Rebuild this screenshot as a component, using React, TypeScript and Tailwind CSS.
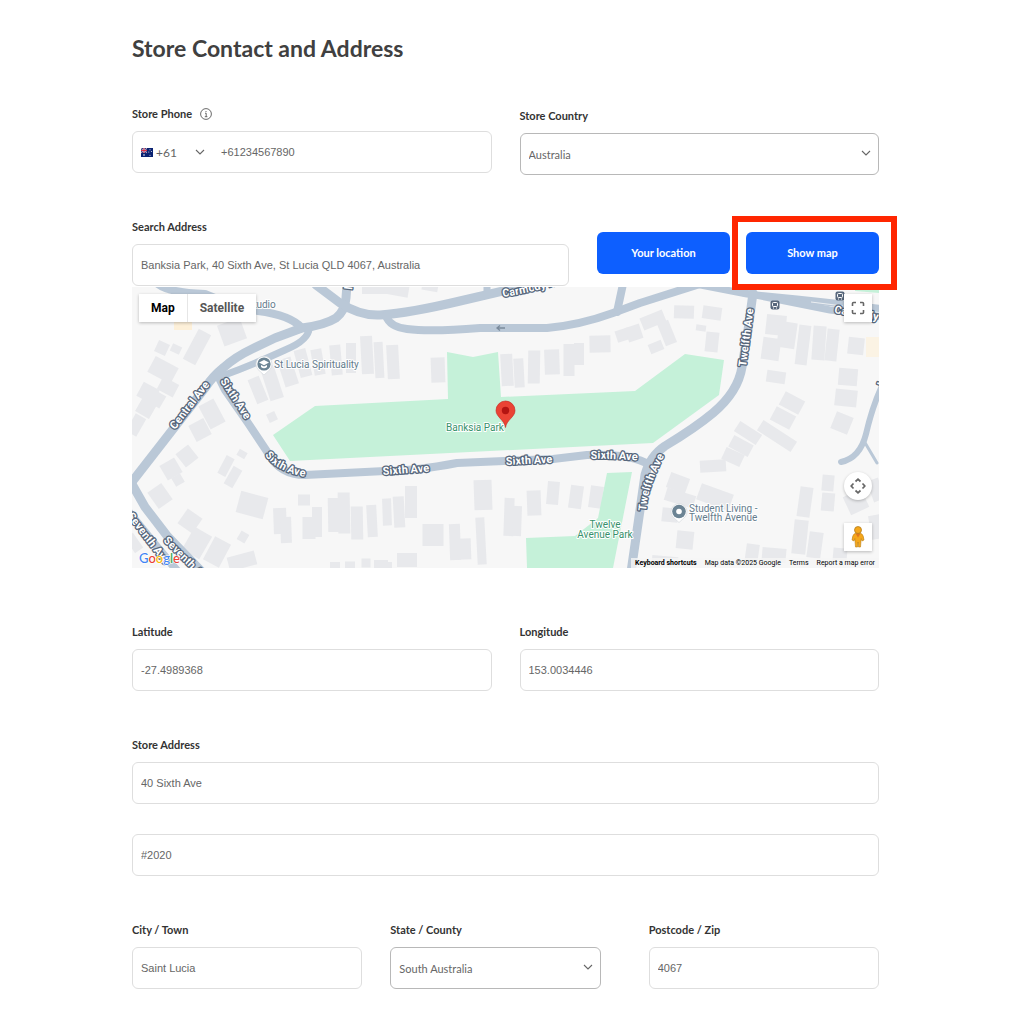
import type { ReactNode } from 'react'

// [center x, center y, width, height, rotation]
type Building = [number, number, number, number, number?]

const buildings: Building[] = [
  [162, 348, 12, 12, 25], [176, 349, 10, 8, 25], [197, 347, 14, 34, 28], [232, 332, 24, 22, -20],
  [163, 370, 26, 18, 28], [148, 393, 18, 16, 28], [168, 387, 18, 14, 28], [258, 390, 12, 26, -22],
  [272, 383, 14, 34, -18], [288, 372, 14, 28, -18], [303, 363, 12, 28, -15], [318, 362, 11, 26, -10],
  [336, 360, 11, 30, -5], [351, 358, 10, 30], [367, 355, 12, 38, -3], [379, 360, 9, 36, -3],
  [375, 289, 26, 10], [393, 288, 32, 14, 10], [430, 287, 16, 8, 10], [393, 362, 12, 34, -3],
  [438, 370, 14, 25, -2], [507, 370, 12, 32, -3], [519, 373, 10, 29, -3], [534, 367, 12, 33, 1],
  [552, 362, 15, 25, -2], [569, 360, 11, 32], [579, 354, 10, 22], [600, 344, 21, 17, -1],
  [623, 335, 14, 12, -18], [634, 333, 15, 15, -18], [653, 320, 24, 13, -22], [667, 333, 12, 24, -22],
  [656, 347, 14, 10, -22], [684, 312, 20, 13, 2], [712, 313, 19, 13, 8], [701, 328, 10, 6, 8],
  [712, 342, 13, 20, 6], [776, 325, 20, 20, 6], [771, 349, 18, 22, 8], [787, 335, 18, 26, 8],
  [803, 345, 12, 40, 7], [819, 343, 13, 34, 4], [832, 345, 12, 32, 6], [856, 346, 16, 17, 6],
  [848, 377, 19, 17, 5], [846, 398, 22, 17, 6], [842, 423, 18, 18, 22], [776, 377, 19, 12, 8],
  [792, 403, 22, 15, 28], [783, 418, 22, 15, 28], [777, 436, 40, 12, 33], [748, 433, 26, 12, 33],
  [741, 446, 22, 13, 28], [733, 457, 20, 13, 25], [713, 466, 26, 12, -3], [678, 483, 20, 16, 20],
  [680, 498, 30, 13, 17], [715, 497, 34, 17, 20], [670, 515, 16, 14, 6], [685, 540, 17, 18, 6],
  [805, 502, 13, 30, 8], [828, 483, 12, 16, 5], [828, 502, 13, 18, 5], [800, 537, 14, 34, 6],
  [752, 554, 13, 20, 8], [774, 555, 24, 14, 5], [815, 545, 14, 26, 8], [840, 555, 14, 14, 5],
  [856, 502, 20, 20, -25], [876, 490, 12, 22, -20], [876, 527, 12, 24, -10], [665, 560, 26, 8, 5],
  [200, 430, 17, 18, -28], [212, 414, 17, 26, -28], [187, 456, 16, 17, -38], [171, 469, 17, 17, -30],
  [178, 480, 10, 10, -30], [160, 496, 17, 20, -35], [190, 521, 18, 18, 35], [197, 543, 20, 26, 30],
  [217, 552, 18, 26, 28], [242, 561, 28, 14, -15], [226, 466, 9, 20, 28], [233, 477, 10, 20, 30],
  [242, 454, 9, 7, 30], [252, 505, 28, 22, 15], [243, 537, 9, 10, 30], [280, 521, 13, 26, -2],
  [286, 530, 11, 26, -2], [304, 500, 12, 11], [309, 528, 13, 22], [317, 522, 10, 30],
  [344, 513, 12, 41, -1], [335, 515, 14, 34, -1], [357, 523, 12, 33, -1], [372, 521, 10, 32, -3],
  [272, 417, 9, 9, -25], [155, 398, 18, 14, 30], [146, 408, 16, 16, 30], [136, 425, 12, 20, 30],
  [335, 565, 10, 6], [350, 565, 10, 7], [366, 563, 9, 9], [381, 564, 14, 8],
  [387, 512, 9, 27, -2], [399, 512, 11, 31, -3], [411, 502, 12, 32], [433, 535, 21, 22],
  [483, 495, 18, 30, -2], [455, 542, 11, 36, -2], [464, 549, 14, 21, -2], [481, 541, 9, 47, -3],
  [509, 517, 10, 38, 2], [517, 521, 9, 30, 2], [534, 503, 14, 25, -2], [553, 493, 12, 23, 5],
  [576, 497, 13, 23, 8], [596, 497, 13, 22, 8], [407, 560, 20, 14], [386, 565, 12, 6],
  [134, 543, 10, 18, -35],
]

const roads: { d: string; w: number }[] = [
  { d: 'M128 487L205 388Q213 376 223 368Q235 357 252 349L275 338L302 328Q325 325 336 318Q345 311 346 298L347 284', w: 9 },
  { d: 'M222 376Q250 366 285 350Q309 340 309 328', w: 7 },
  { d: 'M158 284Q170 293 205 294Q230 305 258 311Q290 315 302 328', w: 8 },
  { d: 'M316 285L340 303Q360 316 380 315Q410 313 460 301L520 287', w: 9 },
  { d: 'M386 316Q390 327 407 329Q430 332 480 328L547 328Q580 325 613 313L640 303L700 284', w: 8 },
  { d: 'M487 284V295', w: 7 },
  { d: 'M623 284L617 312', w: 8 },
  { d: 'M690 283L747 294L797 299L843 304L884 309', w: 7 },
  { d: 'M740 292L790 302L830 310L884 317', w: 7 },
  { d: 'M753 293L748 330L742 367Q738 392 713 413Q695 428 665 446Q650 456 645 475L640 510L631 572', w: 9 },
  { d: 'M217 374L225 390L248 423L268 453Q280 475 305 475L385 471Q415 471 457 463L553 459L587 455Q630 453 650 465', w: 8 },
  { d: 'M128 477L145 507L168 537L202 572', w: 9 },
  { d: 'M128 511L158 548L180 574', w: 8 },
  { d: 'M881 388Q872 408 866 434Q860 458 841 462', w: 6 },
  { d: 'M864 441L877 463', w: 3 },
]

const streets: { id: string; d: string; name: string }[] = [
  { id: 'central', d: 'M175 430L222 369', name: 'Central Ave' },
  { id: 'sixth-a', d: 'M220 381L255 435', name: 'Sixth Ave' },
  { id: 'sixth-b', d: 'M265 455Q279 476 322 479', name: 'Sixth Ave' },
  { id: 'sixth-c', d: 'M383 475L450 470', name: 'Sixth Ave' },
  { id: 'sixth-d', d: 'M506 465L570 462', name: 'Sixth Ave' },
  { id: 'sixth-e', d: 'M591 459Q615 458 652 462', name: 'Sixth Ave' },
  { id: 'twelfth-a', d: 'M746 367L756 290', name: 'Twelfth Ave' },
  { id: 'twelfth-b', d: 'M646 511Q648 480 676 436', name: 'Twelfth Ave' },
  { id: 'seventh-a', d: 'M127 516L175 579', name: 'Seventh Ave' },
  { id: 'seventh-b', d: 'M163 541L205 583', name: 'Seventh Ave' },
  { id: 'carmody-a', d: 'M503 297Q530 293 560 284', name: 'Carmody Rd' },
  { id: 'carmody-b', d: 'M834 313L900 324', name: 'Carmody Rd' },
]

function Chevron({ className = '' }: { className?: string }) {
  return (
    <svg viewBox="0 0 10 10" className={`pointer-events-none absolute h-2.5 w-2.5 ${className}`} aria-hidden="true">
      <path d="M1 3L5 7L9 3" fill="none" stroke="#666" strokeWidth="1.1" />
    </svg>
  )
}

function Flag() {
  return (
    <svg viewBox="0 0 12 9" className="h-[9px] w-3 shrink-0" aria-hidden="true">
      <rect width="12" height="9" fill="#0a2272" />
      <path d="M0 0L6 5M6 0L0 5" stroke="#e9c5d0" strokeWidth="0.8" />
      <path d="M3 0V5M0 2.5H6" stroke="#f3dce2" strokeWidth="1.4" />
      <path d="M3 0V5M0 2.5H6" stroke="#d5203a" strokeWidth="0.9" />
      <circle cx="3" cy="7" r="0.8" fill="#fff" />
      <circle cx="9" cy="1.7" r="0.5" fill="#fff" />
      <circle cx="7.8" cy="4" r="0.5" fill="#fff" />
      <circle cx="10.4" cy="3.6" r="0.5" fill="#fff" />
      <circle cx="9" cy="7.2" r="0.5" fill="#fff" />
    </svg>
  )
}

function Label({ htmlFor, children }: { htmlFor: string; children: ReactNode }) {
  return (
    <label htmlFor={htmlFor} className="block text-[11px] leading-4 font-bold text-[#333]">
      {children}
    </label>
  )
}

interface FieldProps {
  id: string
  label?: string
  value: string
}

function TextField({ id, label, value }: FieldProps) {
  return (
    <div className="flex flex-col gap-[9px]">
      {label && <Label htmlFor={id}>{label}</Label>}
      <input
        id={id}
        type="text"
        aria-label={label ? undefined : 'Store Address line 2'}
        defaultValue={value}
        className="h-[42px] w-full rounded-md border border-[#dedede] bg-white px-2 font-['Liberation_Sans',sans-serif] text-[11px] text-[#666]"
      />
    </div>
  )
}

function SelectField({ id, label, value }: FieldProps) {
  return (
    <div className="flex flex-col gap-[9px]">
      <Label htmlFor={id}>{label}</Label>
      <div className="relative">
        <select
          id={id}
          defaultValue={value}
          className="h-[42px] w-full appearance-none rounded-md border border-[#b8b8b8] bg-white px-2 pt-0.5 text-[11px] text-[#666]"
        >
          <option>{value}</option>
        </select>
        <Chevron className="top-[15px] right-2" />
      </div>
    </div>
  )
}

function MapCanvas() {
  return (
    <svg
      viewBox="132 287 747 281"
      preserveAspectRatio="xMidYMid slice"
      className="h-full w-full font-['Roboto',sans-serif]"
      role="img"
      aria-label="Map of Banksia Park"
    >
      <rect x="-400" y="0" width="2000" height="900" fill="#f7f7f7" />
      <rect x="174" y="322" width="18" height="8" fill="#fdf0d9" />
      <rect x="866" y="337" width="14" height="20" fill="#fbf3e4" />
      <path d="M855 287H879V293L855 291Z" fill="#c5f1d9" />
      <g fill="#e8e9ec">
        {buildings.map(([x, y, w, h, r = 0], i) => (
          <rect key={i} x={x - w / 2} y={y - h / 2} width={w} height={h} transform={`rotate(${r} ${x} ${y})`} />
        ))}
      </g>
      <g fill="#c5f1d9">
        <path d="M447 352L473 357L498 352L501 397L635 391L685 354L724 360L719 395L653 443L290 461L273 435L315 406L448 399Z" />
        <path d="M607 473L632 472L613 568H527L526 538L575 536L598 518Z" />
      </g>
      <g fill="none" stroke="#bac8d7" strokeLinejoin="round" strokeLinecap="round">
        {roads.map((road) => (
          <path key={road.d} d={road.d} strokeWidth={road.w} />
        ))}
      </g>
      <path d="M505 328H497M500 325.5L497 328L500 330.5" fill="none" stroke="#7b8b9c" strokeWidth="1.3" />
      <path d="M811 302L843 306" stroke="#f7f7f7" strokeWidth="0.8" />

      {/* street names */}
      <g fill="#fff" stroke="#57677c" strokeWidth="2.6" strokeLinejoin="round" paintOrder="stroke" fontWeight="700" fontSize="11">
        {streets.map((s) => (
          <g key={s.id}>
            <path id={s.id} d={s.d} fill="none" stroke="none" />
            <text>
              <textPath href={`#${s.id}`}>{s.name}</textPath>
            </text>
          </g>
        ))}
        <text transform="translate(352 290) rotate(-82)">l</text>
        <text transform="translate(883 390) rotate(-70)">J</text>
      </g>

      {/* bus stops */}
      {[[775, 305], [840, 296]].map(([x, y]) => (
        <g key={x}>
          <rect x={x - 4.5} y={y - 4.5} width="9" height="9" rx="2" fill="#57677c" />
          <rect x={x - 2.5} y={y - 2.5} width="5" height="4" rx="1" fill="none" stroke="#fff" />
          <path d={`M${x - 2} ${y + 3}h1M${x + 1} ${y + 3}h1`} stroke="#fff" />
        </g>
      ))}

      {/* places */}
      <g stroke="#fff" strokeWidth="2" strokeLinejoin="round" paintOrder="stroke" fontSize="10">
        <g fill="#647b8c">
          <text x="248" y="308">studio</text>
          <text x="274" y="368">St Lucia Spirituality</text>
          <text x="689" y="512">Student Living -</text>
          <text x="689" y="521">Twelfth Avenue</text>
        </g>
        <g fill="#36916b">
          <text x="446" y="431">Banksia Park</text>
          <text x="605" y="528" textAnchor="middle">Twelve</text>
          <text x="605" y="538" textAnchor="middle">Avenue Park</text>
        </g>
      </g>
      <g>
        <path d="M264 375L258 369.5A8 8 0 1 1 270 369.5Z" fill="#fff" stroke="#d5dade" strokeWidth="0.7" />
        <circle cx="264" cy="364" r="6.6" fill="#6c8494" />
        <path d="M264 360L269 362.6L264 365.2L259 362.6Z" fill="#fff" />
        <path d="M261 365L264 366.6L267 365V367Q264 369.4 261 367Z" fill="#fff" />
      </g>
      <g>
        <path d="M679 522.5L673 517A8 8 0 1 1 685 517Z" fill="#fff" stroke="#d5dade" strokeWidth="0.7" />
        <circle cx="679" cy="511.5" r="6.8" fill="#6c8494" />
        <circle cx="679" cy="511.5" r="2.8" fill="#fff" />
      </g>
      <path d="M505.500 427.500C504.500 420 496 417 496 410.500A9.500 9.500 0 0 1 515 410.500C515 417 506.500 420 505.500 427.500Z" fill="#ea4335" stroke="#c5221f" strokeWidth="0.6" />
      <circle cx="505.500" cy="410.500" r="3.700" fill="#b31412" />
    </svg>
  )
}

const mapControl = 'absolute right-[7px] flex h-7 w-7 items-center justify-center bg-white shadow-[0_1px_3px_rgba(0,0,0,0.25)]'

function MapPanel() {
  return (
    <section className="relative mt-px h-[281px] overflow-hidden font-['Roboto',sans-serif]">
      <MapCanvas />
      <div className="absolute top-[7px] left-[7px] flex h-7 bg-white text-xs shadow-[0_1px_3px_rgba(0,0,0,0.25)]">
        <button type="button" className="border-r border-[#e6e6e6] px-3 font-bold text-black">Map</button>
        <button type="button" className="px-3 font-bold text-[#565656]">Satellite</button>
      </div>
      <button type="button" aria-label="Toggle fullscreen view" className={`${mapControl} top-[7px]`}>
        <svg viewBox="0 0 14 14" className="h-3.5 w-3.5" fill="none" stroke="#666" strokeWidth="1.6">
          <path d="M1.500 5V2.500Q1.500 1.500 2.500 1.500H5M9 1.500H11.500Q12.500 1.500 12.500 2.500V5M12.500 9V11.500Q12.500 12.500 11.500 12.500H9M5 12.500H2.500Q1.500 12.500 1.500 11.500V9" />
        </svg>
      </button>
      <button type="button" aria-label="Map camera controls" className={`${mapControl} bottom-[68px] rounded-full`}>
        <svg viewBox="0 0 16 16" className="h-4 w-4" fill="none" stroke="#666" strokeWidth="1.7">
          <path d="M5.500 3.500L8 1.200L10.500 3.500M5.500 12.500L8 14.800L10.500 12.500M3.500 5.500L1.200 8L3.500 10.500M12.500 5.500L14.800 8L12.500 10.500" />
        </svg>
      </button>
      <button type="button" aria-label="Street View" className={`${mapControl} bottom-[17px]`}>
        <svg viewBox="0 0 14 22" className="h-[22px] w-3.5">
          <path d="M4 7.500H10Q12.500 8 13 14L11 15L10.200 12.500L9.500 21H7.500L7 16L6.500 21H4.500L3.800 12.500L3 15L1 14Q1.500 8 4 7.500Z" fill="#f5a71b" stroke="#b97f1a" strokeWidth="0.6" />
          <path d="M4.500 7.500H9.500L7 11.500Z" fill="#e2761b" />
          <circle cx="7" cy="4" r="3.500" fill="#f5a71b" stroke="#a87416" strokeWidth="0.7" />
        </svg>
      </button>
      <svg viewBox="0 0 44 18" className="absolute bottom-0 left-[6px] h-[18px] w-11 font-['Lato',sans-serif]" role="img" aria-label="Google">
        <text x="1" y="13" fontSize="13" fontWeight="500" stroke="#fff" strokeWidth="1.2" paintOrder="stroke">
          <tspan fill="#4285f4">G</tspan>
          <tspan fill="#ea4335">o</tspan>
          <tspan fill="#fbbc05">o</tspan>
          <tspan fill="#4285f4">g</tspan>
          <tspan fill="#34a853">l</tspan>
          <tspan fill="#ea4335">e</tspan>
        </text>
      </svg>
      <div className="absolute right-0 bottom-0 flex h-2.5 items-center gap-2 bg-[#f5f5f5]/80 px-1 text-[7px] text-black">
        <button type="button" className="font-bold">Keyboard shortcuts</button>
        <span>Map data ©2025 Google</span>
        <a href="#terms">Terms</a>
        <a href="#report">Report a map error</a>
      </div>
    </section>
  )
}

const blueButton = 'h-[42px] w-[133px] rounded-md bg-[#0d5fff] text-[11px] font-bold text-white'

export default function App() {
  return (
    <main className="min-h-screen bg-white font-['Lato',sans-serif]">
      <form className="mx-auto max-w-[1011px] px-33 pt-8 pb-8">
        <h1 className="text-[23px] leading-8 font-bold text-[#404040]">Store Contact and Address</h1>

        <div className="mt-[42px] grid grid-cols-2 items-start gap-7">
          <div className="flex flex-col gap-[9px]">
            <div className="flex h-4 items-center gap-2">
              <Label htmlFor="phone">Store Phone</Label>
              <svg viewBox="0 0 12 12" className="h-3 w-3" fill="none" stroke="#444" aria-hidden="true">
                <circle cx="6" cy="6" r="5.400" strokeWidth="0.8" />
                <path d="M5 5.200H6.200V8.600M4.800 8.700H7.400M6 3V4" strokeWidth="0.8" />
              </svg>
            </div>
            <div className="flex h-[42px] items-center rounded-md border border-[#dedede] px-2">
              <Flag />
              <div className="relative w-[68px] shrink-0">
                <select aria-label="Country code" defaultValue="+61" className="block w-full appearance-none bg-transparent pt-0.5 pl-[3px] text-xs text-[#666]">
                  <option>+61</option>
                </select>
                <Chevron className="top-1 right-4" />
              </div>
              <input
                id="phone"
                type="tel"
                defaultValue="+61234567890"
                className="h-full min-w-0 flex-1 bg-transparent font-['Liberation_Sans',sans-serif] text-[11px] text-[#666]"
              />
            </div>
          </div>
          <div className="pt-0.5">
            <SelectField id="country" label="Store Country" value="Australia" />
          </div>
        </div>

        <div className="mt-11 flex items-end gap-7">
          <div className="flex-1">
            <TextField id="search" label="Search Address" value="Banksia Park, 40 Sixth Ave, St Lucia QLD 4067, Australia" />
          </div>
          <div className="flex gap-4 pb-3">
            <button type="button" className={blueButton}>Your location</button>
            <div className="relative">
              <button type="button" className={blueButton}>Show map</button>
              <div className="pointer-events-none absolute -top-4 -right-[18px] -bottom-4 -left-3.5 z-10 border-6 border-[#ff2600]" />
            </div>
          </div>
        </div>
        <MapPanel />

        <div className="mt-14 grid grid-cols-2 gap-7">
          <TextField id="latitude" label="Latitude" value="-27.4989368" />
          <TextField id="longitude" label="Longitude" value="153.0034446" />
        </div>

        <div className="mt-[46px] flex flex-col gap-[30px]">
          <TextField id="address" label="Store Address" value="40 Sixth Ave" />
          <TextField id="address2" value="#2020" />
        </div>

        <div className="mt-[46px] grid grid-cols-3 gap-7">
          <TextField id="city" label="City / Town" value="Saint Lucia" />
          <div className="pr-5">
            <SelectField id="state" label="State / County" value="South Australia" />
          </div>
          <TextField id="postcode" label="Postcode / Zip" value="4067" />
        </div>
      </form>
    </main>
  )
}
